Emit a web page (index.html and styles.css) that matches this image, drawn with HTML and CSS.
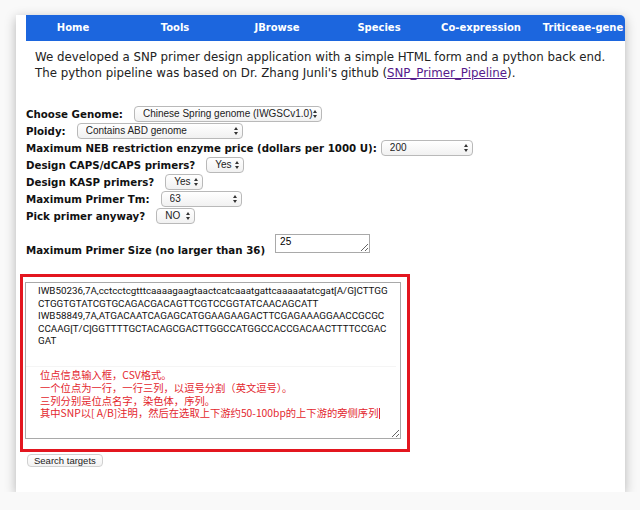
FILE: index.html
```html
<!DOCTYPE html>
<html lang="en">

<head>
  <meta charset="UTF-8">
  <meta name="viewport" content="width=device-width, initial-scale=1.0">
  <title>SNP Primer Design</title>

  <link rel="stylesheet" href="styles.css">
</head>

<body>
  <div class="window">
    <nav class="topnav">
      <ul>
        <li>Home</li>
        <li>Tools</li>
        <li>JBrowse</li>
        <li>Species</li>
        <li>Co-expression</li>
        <li>Triticeae-gene</li>
      </ul>
    </nav>

    <div class="content">
      <p class="intro">
        We developed a SNP primer design application with a simple HTML form and a python back end.<br>
        The python pipeline was based on Dr. Zhang Junli's github (<a href="#">SNP_Primer_Pipeline</a>).
      </p>

      <form class="primer-form">
        <div class="row">
          <label>Choose Genome:</label>
          <span class="select-wrap w-genome">
            <select><option>Chinese Spring genome (IWGSCv1.0)</option></select>
          </span>
        </div>
        <div class="row">
          <label>Ploidy:</label>
          <span class="select-wrap w-ploidy">
            <select><option>Contains ABD genome</option></select>
          </span>
        </div>
        <div class="row tight">
          <label>Maximum NEB restriction enzyme price (dollars per 1000 U):</label>
          <span class="select-wrap w-price">
            <select><option>200</option></select>
          </span>
        </div>
        <div class="row">
          <label>Design CAPS/dCAPS primers?</label>
          <span class="select-wrap w-yes">
            <select><option>Yes</option></select>
          </span>
        </div>
        <div class="row">
          <label>Design KASP primers?</label>
          <span class="select-wrap w-yes">
            <select><option>Yes</option></select>
          </span>
        </div>
        <div class="row">
          <label>Maximum Primer Tm:</label>
          <span class="select-wrap w-tm">
            <select><option>63</option></select>
          </span>
        </div>
        <div class="row">
          <label>Pick primer anyway?</label>
          <span class="select-wrap w-no">
            <select><option>NO</option></select>
          </span>
        </div>

        <div class="size-row">
          <label>Maximum Primer Size (no larger than 36)</label>
          <textarea class="size-input">25</textarea>
        </div>

        <div class="snp-box">
          <textarea class="snp-input" wrap="off">IWB50236,7A,cctcctcgtttcaaaagaagtaactcatcaaatgattcaaaaatatcgat[A/G]CTTGG
CTGGTGTATCGTGCAGACGACAGTTCGTCCGGTATCAACAGCATT
IWB58849,7A,ATGACAATCAGAGCATGGAAGAAGACTTCGAGAAAGGAACCGCGC
CCAAG[T/C]GGTTTTGCTACAGCGACTTGGCCATGGCCACCGACAACTTTTCCGAC
GAT</textarea>
          <div class="note">
            <div>位点信息输入框，CSV格式。</div>
            <div>一个位点为一行，一行三列，以逗号分割（英文逗号）。</div>
            <div>三列分别是位点名字，染色体，序列。</div>
            <div>其中SNP以[ A/B]注明，然后在选取上下游约50-100bp的上下游的旁侧序列<span class="caret"></span></div>
          </div>
        </div>

        <button type="button" class="search-btn">Search targets</button>
      </form>
    </div>
  </div>
</body>

</html>
```

FILE: styles.css
```css
body {
  margin: 0;
  background: #f9f9f9;
  font-family: "DejaVu Sans", Verdana, sans-serif;
}

.window {
  margin: 15px 0 0 16px;
  width: 609px;
  height: 477px;
  padding-left: 10px;
  box-sizing: border-box;
  background: #fff;
  box-shadow: 0 3px 12px rgba(0, 0, 0, 0.28);
  border-top-right-radius: 5px;
}

.topnav {
  height: 26px;
  background: #1c66de;
  border-top-right-radius: 5px;
  overflow: hidden;
}

.topnav ul {
  list-style: none;
  margin: 0 0 0 -4px;
  padding: 0;
  display: flex;
  white-space: nowrap;
}

.topnav li {
  flex: 0 0 102px;
  text-align: center;
  color: #fff;
  font-weight: bold;
  font-size: 10px;
  line-height: 26px;
}

.content {
  padding-top: 8px;
}

.intro {
  margin: 0 0 0 9px;
  font-size: 11.8px;
  line-height: 16px;
  color: #222;
}

.intro a {
  color: #551a8b;
}

.primer-form {
  margin-top: 24px;
}

.row {
  display: flex;
  align-items: center;
  gap: 11px;
  height: 17px;
}

.row.tight {
  gap: 4px;
}

label {
  font-weight: bold;
  font-size: 10.25px;
  line-height: 12px;
  color: #111;
  white-space: nowrap;
}

.select-wrap {
  position: relative;
  display: block;
  height: 16px;
}

.select-wrap select {
  display: block;
  -webkit-appearance: none;
  appearance: none;
  width: 100%;
  height: 16px;
  margin: 0;
  padding: 0 0 0 8px;
  border: 1px solid #b9b9b9;
  border-radius: 4px;
  background: linear-gradient(#ffffff, #f1f1f1);
  font-family: "Liberation Sans", Arial, sans-serif;
  font-size: 10px;
  color: #222;
}

.select-wrap::before,
.select-wrap::after {
  content: "";
  position: absolute;
  right: 5px;
  width: 0;
  height: 0;
  border-left: 2.5px solid transparent;
  border-right: 2.5px solid transparent;
}

.select-wrap::before {
  top: 4px;
  border-bottom: 3px solid #333;
}

.select-wrap::after {
  top: 9px;
  border-top: 3px solid #333;
}

.w-genome { width: 188px; }
.w-ploidy { width: 166px; }
.w-price { width: 92px; }
.w-yes { width: 38px; }
.w-tm { width: 81px; }
.w-no { width: 39px; }

.size-row {
  display: flex;
  align-items: flex-end;
  gap: 10px;
  margin-top: 10px;
}

.size-input {
  width: 95px;
  height: 19px;
  margin: 0 0 3px;
  padding: 1px 4px;
  box-sizing: border-box;
  border: 1px solid #a9a9a9;
  font-family: "Liberation Sans", Arial, sans-serif;
  font-size: 10px;
  line-height: 12px;
  resize: both;
  overflow: hidden;
}

.snp-box {
  position: relative;
  width: 390px;
  height: 178px;
  margin: 18px 0 0 -6px;
  padding: 5px 0 0 2px;
  box-sizing: border-box;
  border: 3px solid #e3161f;
}

.snp-input {
  display: block;
  width: 376px;
  height: 157px;
  margin: 0;
  padding: 2px 2px 0 12px;
  box-sizing: border-box;
  border: 1px solid #a9a9a9;
  font-family: Roboto, "Liberation Sans", Arial, sans-serif;
  font-size: 9.8px;
  line-height: 12.5px;
  color: #111;
  overflow: hidden;
}

.note {
  position: absolute;
  left: 3px;
  top: 89px;
  width: 370px;
  padding: 2px 0 0 14px;
  box-sizing: border-box;
  border-top: 1px solid #f5f5f5;
  font-family: "Noto Sans CJK SC", sans-serif;
  font-size: 10.3px;
  color: #e3262d;
}

.note div {
  height: 12.8px;
  line-height: 12.8px;
}

.caret {
  display: inline-block;
  width: 1px;
  height: 11px;
  margin-left: 1px;
  vertical-align: -2px;
  background: #e3262d;
}

.search-btn {
  display: block;
  margin: 2px 0 0 1px;
  height: 13px;
  padding: 0 6px;
  border: 1px solid #d0d0d0;
  border-radius: 4px;
  background: linear-gradient(#ffffff, #f3f3f3);
  font-family: "Liberation Sans", Arial, sans-serif;
  font-size: 9.5px;
  line-height: 11px;
  color: #222;
}
```
